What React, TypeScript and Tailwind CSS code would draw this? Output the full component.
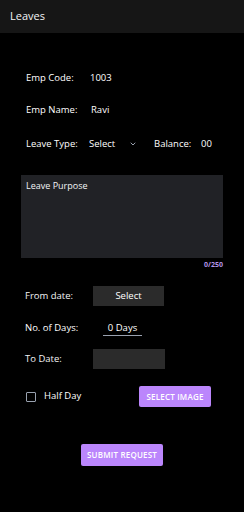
import { ChevronDown } from 'lucide-react'

const font = { fontFamily: '"Open Sans", "DejaVu Sans", sans-serif' }

function Row({ label, children }: { label: string; children?: React.ReactNode }) {
  return (
    <div className="flex items-center h-5">
      <span className="w-[67px] text-[9.5px] text-gray-100">{label}</span>
      {children}
    </div>
  )
}

export default function App() {
  return (
    <div className="w-[244px] h-[512px] bg-black text-white overflow-hidden" style={font}>
      {/* Header */}
      <div className="h-[33px] bg-[#161616] flex items-center px-[10px]">
        <span className="text-[11px] text-gray-100">Leaves</span>
      </div>

      <div className="px-[26px] pt-[35px] flex flex-col">
        <div className="flex items-center h-5">
          <span className="w-[64px] text-[9.5px]">Emp Code:</span>
          <span className="text-[9.5px]">1003</span>
        </div>
        <div className="flex items-center h-5 mt-[12px]">
          <span className="w-[65px] text-[9.5px]">Emp Name:</span>
          <span className="text-[9.5px]">Ravi</span>
        </div>
        <div className="flex items-center h-5 mt-[14px]">
          <span className="w-[63px] text-[9.5px]">Leave Type:</span>
          <span className="text-[9.5px] w-[40px]">Select</span>
          <ChevronDown className="w-[8px] h-[8px] text-gray-400" strokeWidth={3} />
          <span className="text-[9.5px] ml-[17px] w-[47px]">Balance:</span>
          <span className="text-[9.5px]">00</span>
        </div>
      </div>

      {/* Leave purpose */}
      <div className="mx-[21px] mt-[21px] h-[83px] bg-[#212226] px-[5px] pt-[5px] flex flex-col">
        <div className="text-[9px] text-gray-100 h-[12px] flex items-center">Leave Purpose</div>
      </div>
      <div className="mx-[21px] text-right text-[7px] text-[#b394e6] mt-[2px] font-bold leading-[10px]">0/250</div>

      <div className="px-[25px] mt-[16px] flex flex-col">
        <Row label="From date:">
          <div className="w-[71px] h-[20px] bg-[#2b2b2b] flex items-center justify-center text-[9.5px] ml-[1px]">
            Select
          </div>
        </Row>
        <div className="flex items-center h-5 mt-[12px]">
          <span className="w-[78px] text-[9.5px]">No. of Days:</span>
          <span className="w-[39px] text-center text-[9.5px] border-b border-gray-400 leading-[14px]">0 Days</span>
        </div>
        <div className="mt-[11px]">
          <Row label="To Date:">
            <div className="w-[72px] h-[20px] bg-[#2b2b2b] ml-[1px]" />
          </Row>
        </div>
        <div className="flex items-center mt-[17px] h-[21px]">
          <div className="w-[10px] h-[10px] border border-gray-400 rounded-[1px] ml-[1px]" />
          <span className="ml-[8px] text-[9.5px] flex-1">Half Day</span>
          <button className="w-[72px] h-[21px] bg-[#bb86fc] rounded-[2px] text-[8px] font-semibold tracking-wide text-white mr-[8px]">
            SELECT IMAGE
          </button>
        </div>
      </div>

      <div className="flex justify-center mt-[37px]">
        <button className="w-[82px] h-[22px] bg-[#bb86fc] rounded-[2px] text-[8px] font-semibold tracking-wide text-white">
          SUBMIT REQUEST
        </button>
      </div>
    </div>
  )
}
